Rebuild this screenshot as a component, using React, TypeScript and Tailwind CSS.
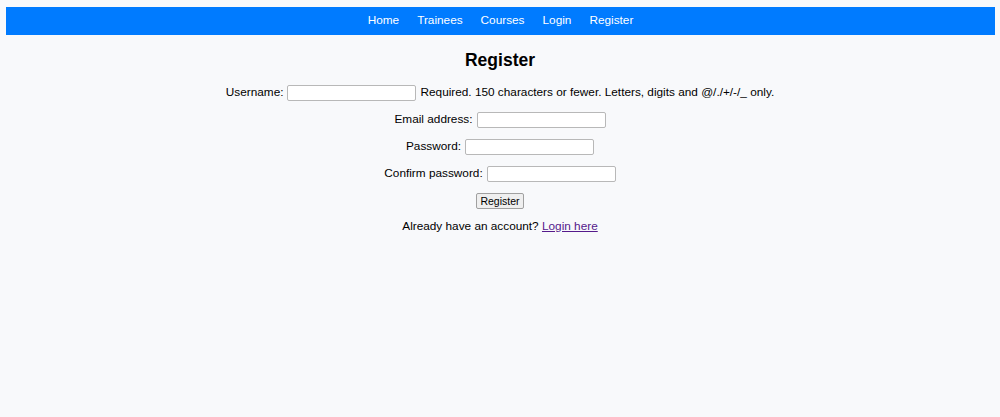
const font = { fontFamily: '"Liberation Sans", Arial, sans-serif' }

function Field({ label, after }: { label: string; after?: string }) {
  return (
    <div className="flex h-[27px] items-center justify-center">
      <label className="mr-[4px]">{label}</label>
      <input
        type="text"
        className="h-[16px] w-[129px] rounded-[2px] border border-[#b8b8b8] bg-white px-1 outline-none"
      />
      {after && <span className="ml-[4px]">{after}</span>}
    </div>
  )
}

export default function App() {
  return (
    <div className="min-h-[417px] bg-[#f8f9fb] pt-[7px] text-[11.8px] text-black" style={font}>
      <nav className="ml-[6px] mr-[5px] flex h-[28px] items-center justify-center gap-[18px] bg-[#007bff] text-white">
        <a href="#">Home</a>
        <a href="#">Trainees</a>
        <a href="#">Courses</a>
        <a href="#">Login</a>
        <a href="#">Register</a>
      </nav>
      <h2 className="mt-[15px] flex h-[20px] items-center justify-center text-[17.5px] font-bold">Register</h2>
      <form className="mt-[9.5px]">
        <Field label="Username:" after="Required. 150 characters or fewer. Letters, digits and @/./+/-/_ only." />
        <Field label="Email address:" />
        <Field label="Password:" />
        <Field label="Confirm password:" />
        <div className="flex h-[27px] items-center justify-center">
          <button
            type="button"
            className="h-[16px] w-[48px] rounded-[2px] border border-[#a0a0a0] bg-[#efefef] text-[10.5px]"
          >
            Register
          </button>
        </div>
      </form>
      <p className="flex h-[25px] items-center justify-center">
        Already have an account?&nbsp;
        <a href="#" className="text-[#551a8b] underline">Login here</a>
      </p>
    </div>
  )
}
